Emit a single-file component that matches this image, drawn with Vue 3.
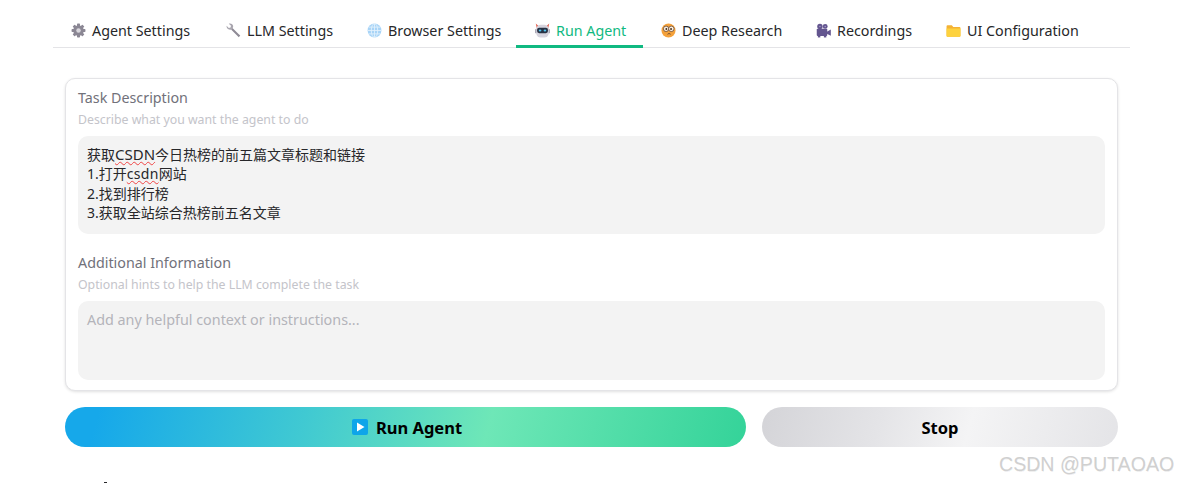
<script setup>
const tabs = [
  { id: 'gear', label: 'Agent Settings', width: 155 },
  { id: 'wrench', label: 'LLM Settings', width: 141 },
  { id: 'globe', label: 'Browser Settings', width: 167 },
  { id: 'robot', label: 'Run Agent', width: 127, active: true },
  { id: 'face', label: 'Deep Research', width: 155 },
  { id: 'camera', label: 'Recordings', width: 130 },
  { id: 'folder', label: 'UI Configuration', width: 150 }
]
</script>

<template>
  <div class="page">
    <nav class="tabs">
      <div
        v-for="t in tabs"
        :key="t.id"
        class="tab"
        :class="{ active: t.active }"
        :style="{ width: t.width + 'px' }"
      >
        <svg class="ico" viewBox="0 0 16 16">
          <template v-if="t.id === 'gear'">
            <g fill="#8b8794">
              <circle cx="8" cy="8" r="5.6" />
              <rect x="6.4" y=".6" width="3.2" height="14.8" rx=".7" />
              <rect x="6.4" y=".6" width="3.2" height="14.8" rx=".7" transform="rotate(45 8 8)" />
              <rect x="6.4" y=".6" width="3.2" height="14.8" rx=".7" transform="rotate(90 8 8)" />
              <rect x="6.4" y=".6" width="3.2" height="14.8" rx=".7" transform="rotate(135 8 8)" />
            </g>
            <circle cx="8" cy="8" r="2.4" fill="#d9d7dd" />
          </template>
          <template v-else-if="t.id === 'wrench'">
            <path d="M5.4 6.8 6.9 5.2 13.4 11.6 15.2 13.4 13.6 15.1 11.8 13.2Z" fill="#8f8b96" />
            <path d="M.6 3 3 5.2 4.9 4.7 5.3 2.9 3 .7C4.9 0 6.9.9 7.5 2.7 7.9 4 7.5 5 6.9 5.6L5.6 7C4 7.5 2.2 7 1.2 5.7.7 4.9.5 3.9.6 3Z" fill="#a9a6af" />
          </template>
          <template v-else-if="t.id === 'globe'">
            <circle cx="8" cy="8" r="7.4" fill="#a8d4f7" />
            <g fill="none" stroke="#e4f2fd" stroke-width=".9">
              <ellipse cx="8" cy="8" rx="3.4" ry="7.4" />
              <path d="M8 .6v14.8M.6 8h14.8M1.8 4.4h12.4M1.8 11.6h12.4" />
            </g>
          </template>
          <template v-else-if="t.id === 'robot'">
            <path d="M.8.4 4 3.5 2 6ZM15.2.4 12 3.5 14 6Z" fill="#e0604f" />
            <rect x="0" y="6.5" width="2.4" height="4.5" rx="1" fill="#a9a7b4" />
            <rect x="13.6" y="6.5" width="2.4" height="4.5" rx="1" fill="#a9a7b4" />
            <rect x="1.4" y="1.8" width="13.2" height="13.6" rx="4.6" fill="#d6d4de" />
            <rect x="2.2" y="5" width="11.6" height="5.8" rx="2.2" fill="#273244" />
            <ellipse cx="5.4" cy="7.9" rx="1.4" ry="1.1" fill="#4fc3ee" />
            <ellipse cx="10.6" cy="7.9" rx="1.4" ry="1.1" fill="#4fc3ee" />
          </template>
          <template v-else-if="t.id === 'face'">
            <circle cx="8" cy="8" r="7.5" fill="#f4a13a" />
            <circle cx="5.4" cy="6.2" r="2.9" fill="#fbeedd" stroke="#5d4030" stroke-width=".8" />
            <circle cx="11" cy="6.2" r="2.9" fill="#fbeedd" stroke="#5d4030" stroke-width=".8" />
            <circle cx="5.7" cy="6.4" r="1" fill="#3f2c20" />
            <circle cx="10.7" cy="6.4" r="1" fill="#3f2c20" />
            <path d="M7 12c1-.9 2.2-.9 3.2 0" fill="none" stroke="#5d4030" stroke-width="1" />
          </template>
          <template v-else-if="t.id === 'camera'">
            <g fill="#63558f">
              <circle cx="4.2" cy="3.6" r="2.9" />
              <circle cx="9.8" cy="3.6" r="2.6" />
              <rect x=".8" y="6" width="11.2" height="7.8" rx="1" />
              <path d="M11.6 9.2 15.8 7v6.6L11.6 11.4Z" />
              <rect x="2" y="13" width="2.6" height="2.4" />
              <rect x="8.4" y="13" width="2.6" height="2.4" />
            </g>
            <circle cx="4.2" cy="3.6" r=".8" fill="#a79ccb" />
            <circle cx="9.8" cy="3.6" r=".8" fill="#a79ccb" />
          </template>
          <template v-else>
            <path d="M.6 3.4a1 1 0 0 1 1-1h4.6l1.6 1.8h6.6a1 1 0 0 1 1 1v8.4a1 1 0 0 1-1 1H1.6a1 1 0 0 1-1-1Z" fill="#f4b234" />
            <path d="M.6 5.8h14.8v7.8a1 1 0 0 1-1 1H1.6a1 1 0 0 1-1-1Z" fill="#fdd23e" />
          </template>
        </svg>
        <span>{{ t.label }}</span>
      </div>
    </nav>

    <section class="card">
      <div class="field">
        <div class="label">Task Description</div>
        <div class="hint">Describe what you want the agent to do</div>
        <div class="box task">
          <div>获取<span class="wavy caps">CSDN</span>今日热榜的前五篇文章标题和链接</div>
          <div>1.打开<span class="wavy">csdn</span>网站</div>
          <div>2.找到排行榜</div>
          <div>3.获取全站综合热榜前五名文章</div>
        </div>
      </div>
      <div class="field">
        <div class="label">Additional Information</div>
        <div class="hint">Optional hints to help the LLM complete the task</div>
        <div class="box extra">Add any helpful context or instructions...</div>
      </div>
    </section>

    <div class="actions">
      <button class="btn run">
        <svg class="play" viewBox="0 0 16 16">
          <rect width="16" height="16" rx="2" fill="#0ea5e9" />
          <path d="M5 3.5 12.5 8 5 12.5Z" fill="#fff" />
        </svg>
        Run Agent
      </button>
      <button class="btn stop">Stop</button>
    </div>

    <div class="sliver"></div>
    <div class="watermark">CSDN @PUTAOAO</div>
  </div>
</template>

<style>
html, body { margin: 0; background: #fff; overflow: hidden; }
</style>

<style scoped>
.page {
  position: relative;
  width: 1180px;
  height: 483px;
  overflow: hidden;
  padding: 14px 50px 0 53px;
  box-sizing: border-box;
  font-family: "Noto Sans", "Noto Sans CJK SC", sans-serif;
  color: #27272a;
}
.tabs {
  display: flex;
  height: 33px;
  border-bottom: 1px solid #e4e4e7;
}
.tab {
  display: flex;
  align-items: center;
  gap: 6px;
  height: 33px;
  padding: 0 0 0 18px;
  font-size: 14.3px;
  line-height: 33px;
  white-space: nowrap;
  box-sizing: border-box;
  flex: none;
}
.tab.active {
  padding-left: 19px;
  color: #10b981;
  box-shadow: inset 0 -2px 0 #10b981, 0 1px 0 #10b981;
}
.ico { width: 15px; height: 15px; flex: none; }
.card {
  margin: 30px 12px 0;
  height: 313px;
  box-sizing: border-box;
  border: 1px solid #e4e4e7;
  border-radius: 10px;
  box-shadow: 0 1px 3px rgba(0, 0, 0, .12);
  padding: 8px 12px 0;
  background: #fff;
}
.field + .field { margin-top: 18px; }
.label {
  font-size: 14.3px;
  line-height: 22px;
  color: #71717a;
}
.hint {
  font-size: 12.3px;
  line-height: 18px;
  margin-top: 2px;
  color: #c4c4ca;
}
.box {
  margin-top: 7px;
  background: #f3f3f3;
  border-radius: 10px;
  padding: 9px;
  box-sizing: border-box;
  font-size: 14px;
  line-height: 19.4px;
}
.task { height: 98px; color: #27272a; }
.extra { height: 79px; color: #b4b4ba; font-size: 14.35px; }
.wavy {
  text-decoration: underline wavy #ef4444 1.3px;
  text-underline-offset: 1px;
  letter-spacing: .3px;
}
.caps { font-size: 15px; letter-spacing: 0; }
.actions {
  display: flex;
  gap: 16px;
  margin: 16px 12px 0;
}
.btn {
  height: 40px;
  border: 0;
  border-radius: 20px;
  font-family: inherit;
  font-size: 16.5px;
  font-weight: 700;
  color: #000;
  display: flex;
  align-items: center;
  justify-content: center;
  gap: 8px;
  padding: 0;
}
.run {
  width: 681px;
  padding-left: 3px;
  background: linear-gradient(105deg, #16a8ea 5%, #40c9d2 35%, #6ee7b7 62%, #34d399 100%);
}
.stop {
  flex: 1;
  background: linear-gradient(105deg, #d4d4d8 0%, #e4e4e7 33%, #f4f4f5 58%, #e4e4e7 100%);
}
.play { width: 16px; height: 16px; }
.sliver {
  position: absolute;
  left: 104px;
  top: 482px;
  width: 3px;
  height: 1px;
  background: #27272a;
}
.watermark {
  position: absolute;
  left: 999px;
  top: 452px;
  font-family: "Liberation Sans", sans-serif;
  font-size: 19.6px;
  line-height: 24px;
  color: #d0d0d0;
  text-shadow: .5px .5px 0 rgba(0, 0, 0, .06);
  white-space: nowrap;
}
</style>
